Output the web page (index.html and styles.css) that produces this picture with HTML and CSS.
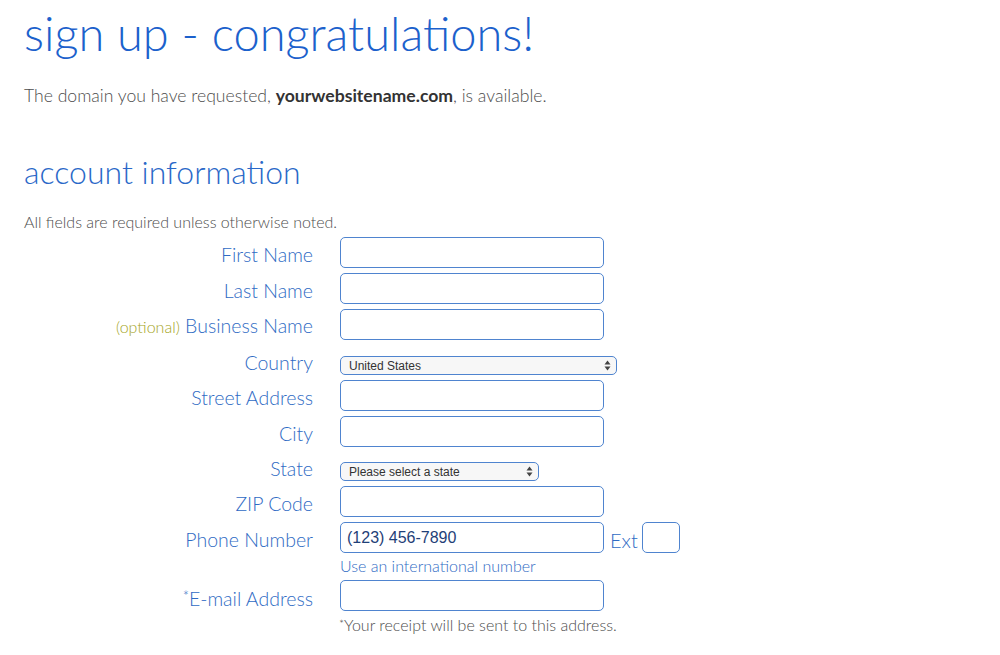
FILE: index.html
```html
<!DOCTYPE html>
<html lang="en">
<head>
<meta charset="utf-8">
<title>sign up - congratulations!</title>
<link rel="stylesheet" href="styles.css">
</head>
<body>
<main class="page">
  <h1 class="title">sign up - congratulations!</h1>
  <p class="domain">The domain you have requested, <strong>yourwebsitename.com</strong>, is available.</p>
  <h2 class="section">account information</h2>
  <p class="note">All fields are required unless otherwise noted.</p>
  <form class="form">
    <div class="row">
      <label class="label">First Name</label>
      <input class="field" type="text">
    </div>
    <div class="row">
      <label class="label">Last Name</label>
      <input class="field" type="text">
    </div>
    <div class="row">
      <label class="label"><span class="optional">(optional)</span> Business Name</label>
      <input class="field" type="text">
    </div>
    <div class="row row-select row-country">
      <label class="label">Country</label>
      <div class="select-wrap select-country">
        <select class="select"><option>United States</option></select>
        <svg class="arrows" width="7" height="11" viewBox="0 0 7 11"><path d="M3.5 0.5 L6.5 4.5 H0.5 Z M3.5 10.5 L6.5 6.5 H0.5 Z" fill="#444"/></svg>
      </div>
    </div>
    <div class="row">
      <label class="label">Street Address</label>
      <input class="field" type="text">
    </div>
    <div class="row">
      <label class="label">City</label>
      <input class="field" type="text">
    </div>
    <div class="row row-select">
      <label class="label">State</label>
      <div class="select-wrap select-state">
        <select class="select"><option>Please select a state</option></select>
        <svg class="arrows" width="7" height="11" viewBox="0 0 7 11"><path d="M3.5 0.5 L6.5 4.5 H0.5 Z M3.5 10.5 L6.5 6.5 H0.5 Z" fill="#444"/></svg>
      </div>
    </div>
    <div class="row">
      <label class="label">ZIP Code</label>
      <input class="field" type="text">
    </div>
    <div class="row">
      <label class="label">Phone Number</label>
      <input class="field phone" type="text" value="(123) 456-7890">
      <span class="ext">Ext</span>
      <input class="field ext-field" type="text">
    </div>
    <p class="help">Use an international number</p>
    <div class="row">
      <label class="label"><span class="star">*</span>E-mail Address</label>
      <input class="field" type="text">
    </div>
    <p class="receipt"><span class="star">*</span>Your receipt will be sent to this address.</p>
  </form>
</main>
</body>
</html>
```
FILE: styles.css
```css
html, body {
  margin: 0;
  padding: 0;
  background: #ffffff;
}

body {
  font-family: Lato, "Open Sans", "Liberation Sans", sans-serif;
  font-weight: 300;
  color: #4d4d4d;
}

.page {
  padding: 0 0 0 24px;
}

.title {
  margin: 0;
  padding-top: 5px;
  font-size: 47px;
  line-height: 56px;
  font-weight: 300;
  color: #1c61cc;
}

.domain {
  margin: 24px 0 0;
  font-size: 17.6px;
  line-height: 22px;
  color: #4d4d4d;
}

.domain strong {
  font-weight: 700;
  color: #333333;
}

.section {
  margin: 45px 0 0;
  font-size: 32px;
  line-height: 40px;
  font-weight: 300;
  color: #2a68c8;
}

.note {
  margin: 20px 0 0;
  font-size: 16px;
  line-height: 20px;
  color: #4d4d4d;
}

.form {
  margin: 5px 0 0;
}

.row {
  display: flex;
  align-items: center;
  margin-bottom: 5px;
}

.label {
  width: 289px;
  margin-right: 27px;
  text-align: right;
  font-size: 19.5px;
  line-height: 24px;
  padding-top: 4px;
  color: #2f6bc4;
  white-space: nowrap;
}

.optional {
  font-size: 16px;
  color: #a5a51d;
}

.star {
  font-size: 0.75em;
  vertical-align: 0.25em;
}

.field {
  box-sizing: border-box;
  width: 264px;
  height: 31px;
  margin: 0;
  padding: 0 6px;
  border: 1.5px solid #4f84cf;
  border-radius: 5px;
  background: #ffffff;
  font-family: "Liberation Sans", Arial, sans-serif;
  font-size: 16px;
  color: #1f3f78;
  outline: none;
}

.ext {
  margin-left: 6px;
  font-size: 20px;
  color: #2f6bc4;
  padding-top: 4px;
}

.ext-field {
  width: 38px;
  margin-left: 4px;
}

.row-select {
  align-items: flex-end;
  height: 29px;
}

.row-country {
  height: 30px;
}

.row-select .label {
  padding-top: 0;
  line-height: 24px;
}

.select-wrap {
  position: relative;
  display: flex;
}

.select-country {
  width: 277px;
}

.select-state {
  width: 199px;
}

.select {
  -webkit-appearance: none;
  appearance: none;
  box-sizing: border-box;
  width: 100%;
  height: 19px;
  margin: 0;
  padding: 0 18px 0 8px;
  border: 1.5px solid #4f84cf;
  border-radius: 5px;
  background: #f7f7f7;
  font-family: "Liberation Sans", Arial, sans-serif;
  font-size: 12px;
  line-height: 16px;
  color: #333333;
  outline: none;
}

.arrows {
  position: absolute;
  right: 6px;
  top: 4px;
  pointer-events: none;
}

.help {
  margin: -2px 0 4px 316px;
  font-size: 16px;
  line-height: 20px;
  color: #2f6bc4;
}

.receipt {
  margin: -2px 0 0 315px;
  font-size: 16px;
  line-height: 20px;
  color: #4d4d4d;
}
```
